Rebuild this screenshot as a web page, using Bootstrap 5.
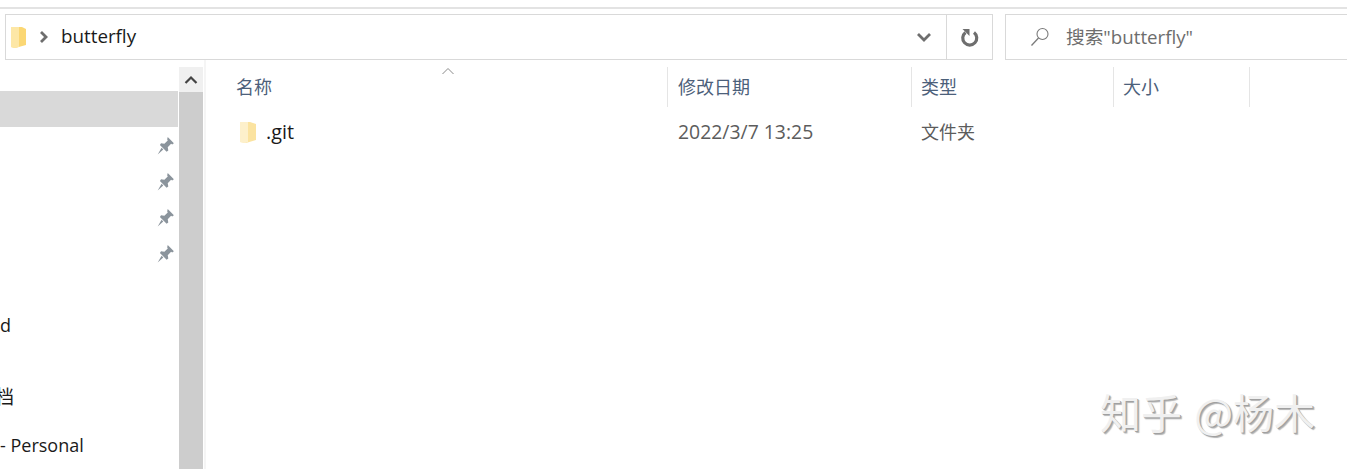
<!DOCTYPE html>
<html lang="zh-CN">
  <head>
    <meta charset="UTF-8" />
    <title>butterfly</title>
    <link href="https://cdn.jsdelivr.net/npm/bootstrap@5.3.2/dist/css/bootstrap.min.css" rel="stylesheet" />
    <style>
      body {
        font-family: "Open Sans", "Noto Sans CJK SC", sans-serif;
        font-size: 18px;
        color: #1a1a1a;
        background: #fff;
        height: 469px;
        overflow: hidden;
      }
      .top-rule { height: 9px; border-bottom: 2px solid #e3e3e3; }
      .bar-row { height: 46px; margin: 5px 0 0 5px; }
      .address-box { width: 988px; border: 1px solid #d9d9d9; }
      .address-box .crumb { font-size: 18.8px; line-height: 1; margin-left: 11px; padding-bottom: 2px; }
      .down-arrow { margin-right: 14px; }
      .refresh-cell { width: 46px; border-left: 1px solid #d9d9d9; }
      .search-box { margin-left: 12px; border: 1px solid #d9d9d9; border-right: 0; color: #6d6d6d; font-size: 18.7px; }
      .side-pane { width: 204px; height: 409px; }
      .side-list { width: 179px; padding-top: 31px; }
      .side-row { height: 36px; }
      .side-row.active-row { background: #d9d9d9; margin-right: 1px; }
      .side-gap { height: 36px; }
      .side-text { height: 36px; line-height: 36px; }
      .side-clip { margin-top: 36px; font-size: 19px; text-indent: -5px; }
      .side-last { margin-top: 12px; }
      .scroll-track { width: 24px; margin-top: 7px; background: #cdcdcd; }
      .scroll-up { height: 25px; background: #f0f0f0; }
      .list-pane { border-left: 2px solid #f5f5f5; padding-top: 7px; height: 409px; }
      .col-grid { display: grid; grid-template-columns: 442px 244px 202px 136px; margin-left: 20px; }
      .head-cell { height: 40px; line-height: 40px; padding-left: 9px; color: #4c607a; font-size: 18px; border-right: 1px solid #e5e5e5; position: relative; }
      .head-cell:first-child { padding-left: 10px; }
      .head-cell:nth-child(2) { padding-left: 10px; }
      .sort-arrow { position: absolute; top: 0; left: 215px; line-height: 1; }
      .file-cell { height: 36px; padding-left: 9px; margin-top: 7px; color: #5c5c5c; font-size: 18px; line-height: 36px; }
      .file-cell:first-child { padding-left: 10px; }
      .file-cell.date-text { font-size: 19.4px; padding-left: 10px; }
      .file-icon { margin-right: 10px; }
      .file-name { color: #1a1a1a; font-size: 19.8px; }
      .brand-mark {
        position: absolute;
        left: 1100px;
        top: 386px;
        font-family: "Noto Sans CJK SC", sans-serif;
        font-size: 41px;
        line-height: 50px;
        word-spacing: 3px;
        color: #f0f0f0;
        text-shadow: 1px 1px 0 #a0a0a0, 2px 2px 1px #b4b4b4;
        white-space: nowrap;
      }
    </style>
  </head>
  <body>
    <div class="top-rule"></div>

    <!-- Address and search -->
    <div class="bar-row d-flex">
      <div class="address-box d-flex align-items-center">
        <svg class="ms-1" width="20" height="24" viewBox="0 0 20 24">
          <path d="M1 2h11l4 2v16l-11 3-4-1z" fill="#fbd774" />
          <path d="M1 2h8v20l-4 1-4-1z" fill="#fde7a6" />
        </svg>
        <svg class="ms-2" width="12" height="14" viewBox="0 0 12 14">
          <path d="M3 2l5 5-5 5" fill="none" stroke="#6e6e6e" stroke-width="2.800" />
        </svg>
        <span class="crumb">butterfly</span>
        <svg class="ms-auto down-arrow" width="16" height="10" viewBox="0 0 16 10">
          <path d="M2 2l6 6 6-6" fill="none" stroke="#6e6e6e" stroke-width="2.800" />
        </svg>
        <div class="refresh-cell h-100 d-flex align-items-center justify-content-center">
          <svg width="20" height="22" viewBox="0 0 20 22">
            <path d="M5.500 6.500a7 7 0 1 0 8.500 0" fill="none" stroke="#6e6e6e" stroke-width="3.200" />
            <path d="M2.500 3h7v7z" fill="#6e6e6e" />
          </svg>
        </div>
      </div>
      <div class="search-box flex-grow-1 d-flex align-items-center">
        <svg class="ms-4" width="20" height="22" viewBox="0 0 20 22">
          <circle cx="12.500" cy="8" r="5.500" fill="none" stroke="#7a7a7a" stroke-width="1.100" />
          <path d="M8.500 12l-7 7.500" stroke="#7a7a7a" stroke-width="1.300" />
        </svg>
        <span class="ms-3">搜索"butterfly"</span>
      </div>
    </div>

    <div class="d-flex">
      <!-- Navigation pane -->
      <div class="side-pane d-flex flex-shrink-0">
        <div class="side-list">
          <div class="side-row active-row"></div>
          <div class="side-row d-flex align-items-center justify-content-end pe-1"><svg width="19" height="19" viewBox="0 0 17 17"><path d="M10.500 1l5.500 5.500-1.500 1-1-.5-3 3 .5 3-1.500 1-6-6 1-1.500 3 .5 3-3-.5-1zM5 10.500l1.500 1.500-5 4.500z" fill="#8b949c" /></svg></div>
          <div class="side-row d-flex align-items-center justify-content-end pe-1"><svg width="19" height="19" viewBox="0 0 17 17"><path d="M10.500 1l5.500 5.500-1.500 1-1-.5-3 3 .5 3-1.500 1-6-6 1-1.500 3 .5 3-3-.5-1zM5 10.500l1.500 1.500-5 4.500z" fill="#8b949c" /></svg></div>
          <div class="side-row d-flex align-items-center justify-content-end pe-1"><svg width="19" height="19" viewBox="0 0 17 17"><path d="M10.500 1l5.500 5.500-1.500 1-1-.5-3 3 .5 3-1.500 1-6-6 1-1.500 3 .5 3-3-.5-1zM5 10.500l1.500 1.500-5 4.500z" fill="#8b949c" /></svg></div>
          <div class="side-row d-flex align-items-center justify-content-end pe-1"><svg width="19" height="19" viewBox="0 0 17 17"><path d="M10.500 1l5.500 5.500-1.500 1-1-.5-3 3 .5 3-1.500 1-6-6 1-1.500 3 .5 3-3-.5-1zM5 10.500l1.500 1.500-5 4.500z" fill="#8b949c" /></svg></div>
          <div class="side-gap"></div>
          <div class="side-text">d</div>
          <div class="side-text overflow-hidden side-clip">档</div>
          <div class="side-text side-last">- Personal</div>
        </div>
        <div class="scroll-track">
          <div class="scroll-up d-flex align-items-center justify-content-center">
            <svg width="14" height="10" viewBox="0 0 14 10"><path d="M1.500 8l5.500-5.500 5.500 5.500" fill="none" stroke="#444" stroke-width="2.200" /></svg>
          </div>
        </div>
      </div>

      <!-- File list -->
      <div class="list-pane flex-grow-1">
        <div class="col-grid">
          <div class="head-cell">名称
            <svg class="sort-arrow" width="14" height="8" viewBox="0 0 14 8"><path d="M1.500 7l5.500-5.500 5.500 5.500" fill="none" stroke="#8a8a8a" stroke-width="1" /></svg>
          </div>
          <div class="head-cell">修改日期</div>
          <div class="head-cell">类型</div>
          <div class="head-cell">大小</div>
        </div>
        <div class="col-grid">
          <div class="file-cell d-flex align-items-center">
            <svg class="file-icon" width="20" height="24" viewBox="0 0 20 24">
              <path d="M4 2h10l6 2v16l-10 3-6-1z" fill="#fbe3a0" />
              <path d="M4 2h8v20l-3 1-5-1z" fill="#fdf0cb" />
            </svg>
            <span class="file-name">.git</span>
          </div>
          <div class="file-cell date-text">2022/3/7 13:25</div>
          <div class="file-cell">文件夹</div>
          <div class="file-cell"></div>
        </div>
      </div>
    </div>

    <div class="brand-mark">知乎 @杨木</div>

    <script src="https://cdn.jsdelivr.net/npm/bootstrap@5.3.2/dist/js/bootstrap.bundle.min.js"></script>
  </body>
</html>
